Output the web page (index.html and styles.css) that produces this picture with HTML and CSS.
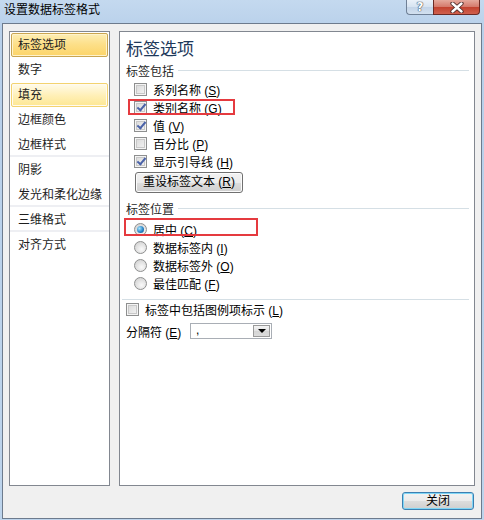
FILE: index.html
```html
<!DOCTYPE html>
<html lang="zh-CN">
<head>
  <meta charset="UTF-8">
  <title>设置数据标签格式</title>
  <link rel="stylesheet" href="styles.css">
</head>
<body>
  <div class="window">
    <div class="titlebar">
      <span class="title">设置数据标签格式</span>
      <div class="caption">
        <div class="cap-help">?</div>
        <div class="cap-close">
          <svg width="14" height="11" viewBox="0 0 14 11">
            <path d="M2.5 1.5 L11.5 9.5 M11.5 1.5 L2.5 9.5" stroke="#4a2a28" stroke-width="4.2" stroke-linecap="round"/>
            <path d="M2.5 1.5 L11.5 9.5 M11.5 1.5 L2.5 9.5" stroke="#fff" stroke-width="2.4" stroke-linecap="round"/>
          </svg>
        </div>
      </div>
    </div>

    <div class="client">
      <div class="panes">
        <ul class="nav">
          <li><span class="nav-label selected">标签选项</span></li>
          <li><span class="nav-label">数字</span></li>
          <li><span class="nav-label hover">填充</span></li>
          <li><span class="nav-label">边框颜色</span></li>
          <li class="group-end"><span class="nav-label">边框样式</span></li>
          <li><span class="nav-label">阴影</span></li>
          <li class="group-end"><span class="nav-label">发光和柔化边缘</span></li>
          <li class="group-end"><span class="nav-label">三维格式</span></li>
          <li><span class="nav-label">对齐方式</span></li>
        </ul>

        <div class="page">
          <h1>标签选项</h1>

          <div class="group-title">标签包括</div>
          <div class="opt-list">
            <div class="row"><span class="box"></span><span>系列名称 (<u>S</u>)</span></div>
            <div class="row">
              <span class="box checked"></span><span>类别名称 (<u>G</u>)</span>
              <div class="mark mark-category"></div>
            </div>
            <div class="row"><span class="box checked"></span><span>值 (<u>V</u>)</span></div>
            <div class="row"><span class="box"></span><span>百分比 (<u>P</u>)</span></div>
            <div class="row"><span class="box checked"></span><span>显示引导线 (<u>H</u>)</span></div>
            <button class="btn reset-btn">重设标签文本 (<u>R</u>)</button>
          </div>

          <div class="group-title pos-title">标签位置</div>
          <div class="opt-list">
            <div class="row">
              <span class="radio on"></span><span>居中 (<u>C</u>)</span>
              <div class="mark mark-center"></div>
            </div>
            <div class="row"><span class="radio"></span><span>数据标签内 (<u>I</u>)</span></div>
            <div class="row"><span class="radio"></span><span>数据标签外 (<u>O</u>)</span></div>
            <div class="row"><span class="radio"></span><span>最佳匹配 (<u>F</u>)</span></div>
          </div>

          <div class="sep"></div>

          <div class="row"><span class="box"></span><span>标签中包括图例项标示 (<u>L</u>)</span></div>
          <div class="row sep-row">
            <span class="sep-label">分隔符 (<u>E</u>)</span>
            <div class="combo">
              <span class="combo-text">,</span>
              <span class="combo-btn"><span class="arrow"></span></span>
            </div>
          </div>
        </div>
      </div>

      <div class="footer">
        <button class="btn btn-default">关闭</button>
      </div>
    </div>
  </div>
</body>
</html>
```

FILE: styles.css
```css
* {
  box-sizing: border-box;
}
body {
  margin: 0;
  font-family: "Liberation Sans", "Noto Sans CJK SC", sans-serif;
  font-size: 12px;
  color: #1e1e1e;
}
.window {
  width: 484px;
  height: 520px;
  padding: 0 2px 1px;
  display: flex;
  flex-direction: column;
  background: linear-gradient(to bottom, #c4d9ef, #b8d0ea 30px, #bdd4ec);
}

/* title bar */
.titlebar {
  height: 23px;
  display: flex;
  justify-content: space-between;
  align-items: flex-start;
  padding-left: 2px;
}
.title {
  line-height: 21px;
  color: #000;
}
.caption {
  display: flex;
  margin-right: 2px;
}
.cap-help {
  width: 27px;
  height: 15px;
  border: 1px solid #6f8096;
  border-top: none;
  border-right: none;
  border-radius: 0 0 0 4px;
  background: linear-gradient(to bottom, #eaf1f9, #d6e3f1 50%, #c3d4e8 51%, #d2e0ef);
  color: #fff;
  font-family: "DejaVu Sans", sans-serif;
  font-weight: bold;
  font-size: 12px;
  line-height: 14px;
  text-align: center;
  text-shadow: 0 0 1px #3d4a5b, 0 0 1px #3d4a5b, 0 0 1px #3d4a5b;
}
.cap-close {
  width: 47px;
  height: 15px;
  border: 1px solid #6b2a25;
  border-top: none;
  border-radius: 0 0 4px 0;
  background: linear-gradient(to bottom, #e5a99d, #d4786a 50%, #c2412f 51%, #d0604d);
  display: flex;
  align-items: center;
  justify-content: center;
}

/* client area */
.client {
  flex: 1;
  background: #f0f0f0;
  border: 1px solid #6d7b8d;
  padding: 7px 6px 0;
  display: flex;
  flex-direction: column;
}
.panes {
  display: flex;
  gap: 9px;
  height: 455px;
}

/* left list */
.nav {
  width: 101px;
  margin: 0;
  padding: 0;
  list-style: none;
  background: #fff;
  border: 1px solid #828790;
}
.nav li {
  height: 25px;
  padding: 1px 1px 0;
}
.nav li.group-end {
  border-bottom: 2px solid #eeeff3;
}
.nav-label {
  display: block;
  height: 24px;
  line-height: 22px;
  padding-left: 6px;
  border: 1px solid transparent;
  border-radius: 2px;
  white-space: nowrap;
}
.nav-label.selected {
  border-color: #c9a550;
  background: linear-gradient(to bottom, #fdeeb4, #fde08a 45%, #fcd468);
  box-shadow: inset 0 0 0 1px #fff3cc;
}
.nav-label.hover {
  border-color: #f3d36f;
  background: linear-gradient(to bottom, #fffbea, #fff0b9 50%, #fde792);
  box-shadow: inset 0 0 0 1px #fffaf0;
}

/* right page */
.page {
  flex: 1;
  background: #fff;
  border: 1px solid #828790;
  padding: 7px 5px 0 6px;
}
.page h1 {
  margin: 0;
  font-size: 17px;
  font-weight: normal;
  line-height: 22px;
  color: #1e395b;
}
.group-title {
  display: flex;
  align-items: center;
  height: 19px;
  color: #1e1e1e;
}
.group-title::after {
  content: "";
  flex: 1;
  border-top: 1px solid #d5dfe5;
  margin-left: 4px;
}
.pos-title {
  margin-top: 6px;
  margin-bottom: 2px;
}
.opt-list {
  padding-left: 8px;
}
.row {
  position: relative;
  display: flex;
  align-items: center;
  height: 18px;
  gap: 6px;
  color: #000;
  white-space: nowrap;
}

/* checkbox / radio */
.box {
  width: 13px;
  height: 13px;
  flex: none;
  position: relative;
  border: 1px solid #8e8f8f;
  background: linear-gradient(135deg, #d6d6d6, #f6f6f6);
  box-shadow: inset 0 0 0 1px #f4f4f4, inset 0 0 0 2px #c8c8c8;
}
.box.checked::after {
  content: "";
  position: absolute;
  left: 2px;
  top: 2px;
  width: 7px;
  height: 3px;
  border-left: 2px solid #4a62a8;
  border-bottom: 2px solid #4a62a8;
  transform: rotate(-50deg);
}
.radio {
  width: 13px;
  height: 13px;
  flex: none;
  position: relative;
  border-radius: 50%;
  border: 1px solid #8e8f8f;
  background: radial-gradient(circle at 60% 65%, #fafafa, #d4d4d4 80%);
}
.radio.on::after {
  content: "";
  position: absolute;
  left: 2px;
  top: 2px;
  width: 7px;
  height: 7px;
  border-radius: 50%;
  background: radial-gradient(circle at 35% 35%, #a9e6ff, #2a86c8 55%, #0e4a82);
}

/* buttons */
.btn {
  font: inherit;
  color: #000;
  padding: 0;
  border: 1px solid #707070;
  border-radius: 3px;
  background: linear-gradient(to bottom, #f2f2f2, #ebebeb 50%, #dddddd 51%, #cfcfcf);
  box-shadow: inset 0 0 0 1px #fbfbfb;
}
.reset-btn {
  display: block;
  width: 108px;
  height: 21px;
  margin: 2px 0 0 1px;
  line-height: 19px;
}
.btn-default {
  width: 72px;
  height: 18px;
  line-height: 16px;
  border-color: #3c7fb1;
  box-shadow: inset 0 0 0 1px #7fd6f6;
}

/* annotation boxes */
.mark {
  position: absolute;
  border: 2px solid #e53a3f;
}
.mark-category {
  left: -6px;
  top: 1px;
  width: 107px;
  height: 16px;
}
.mark-center {
  left: -10px;
  top: -2px;
  width: 134px;
  height: 18px;
}

.sep {
  height: 1px;
  background: #d5dfe5;
  margin: 7px 0 0 -4px;
}
.sep-row {
  margin-top: 4px;
  gap: 0;
}
.sep-label {
  width: 64px;
}
.combo {
  width: 82px;
  height: 16px;
  display: flex;
  justify-content: space-between;
  align-items: stretch;
  border: 1px solid #a9aeb5;
  background: #fff;
}
.combo-text {
  padding-left: 5px;
  line-height: 13px;
}
.combo-btn {
  width: 17px;
  margin: 1px;
  border: 1px solid #9a9a9a;
  background: linear-gradient(to bottom, #f4f4f4, #e2e2e2 50%, #d4d4d4 51%, #dcdcdc);
  display: flex;
  align-items: center;
  justify-content: center;
}
.arrow {
  width: 0;
  height: 0;
  border-left: 4px solid transparent;
  border-right: 4px solid transparent;
  border-top: 4px solid #000;
}

.footer {
  display: flex;
  justify-content: flex-end;
  margin-top: 6px;
  padding-right: 1px;
}
```
